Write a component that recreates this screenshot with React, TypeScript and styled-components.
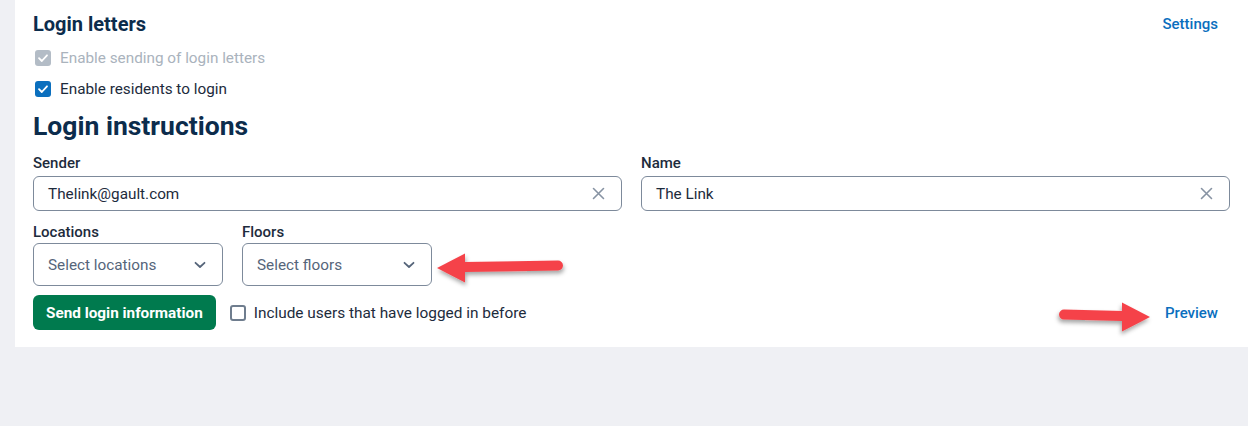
import React from 'react'
import styled, { createGlobalStyle } from 'styled-components'

const GlobalStyle = createGlobalStyle`
  body {
    margin: 0;
    background: #eff0f4;
    font-family: Roboto, 'Liberation Sans', Arial, sans-serif;
  }
`

const Page = styled.div`
  position: relative;
  height: 426px;
  padding-left: 15px;
  background: #eff0f4;
`

const Panel = styled.section`
  background: #fff;
  padding: 12px 18px 17px;
  color: #1d2b3c;
`

const HeaderRow = styled.div`
  display: flex;
  justify-content: space-between;
  align-items: center;
`

const Title = styled.h2`
  margin: 0;
  font-size: 20px;
  line-height: 24px;
  font-weight: 700;
  color: #0c2c4c;
`

const BigTitle = styled.h1`
  margin: 9px 0 0;
  font-size: 26.5px;
  line-height: 32px;
  font-weight: 700;
  color: #0c2c4c;
`

const Link = styled.a`
  color: #0a6fbe;
  font-size: 15px;
  font-weight: 500;
  text-decoration: none;
  margin-right: 12px;
`

const CheckRow = styled.label<{ disabled?: boolean }>`
  display: flex;
  align-items: center;
  gap: 9px;
  height: 24px;
  margin-top: ${p => (p.disabled ? '10px' : '7px')};
  padding-left: 2px;
  font-size: 15.3px;
  color: ${p => (p.disabled ? '#aab3bd' : '#1d2b3c')};
`

const Box = styled.span<{ checked?: boolean; disabled?: boolean }>`
  width: 16px;
  height: 16px;
  box-sizing: border-box;
  border-radius: 3px;
  display: inline-flex;
  align-items: center;
  justify-content: center;
  flex-shrink: 0;
  background: ${p => (p.disabled ? '#b3bcc6' : p.checked ? '#0b6fbe' : '#fff')};
  border: ${p => (p.checked ? 'none' : '2px solid #6f7d8e')};
`

const FieldGrid = styled.div`
  display: grid;
  grid-template-columns: 1fr 1fr;
  column-gap: 19px;
  margin-top: 11px;
`

const SelectRow = styled.div`
  display: flex;
  gap: 19px;
  margin-top: 11px;
`

const Field = styled.div<{ width?: number }>`
  display: flex;
  flex-direction: column;
  width: ${p => (p.width ? `${p.width}px` : 'auto')};
`

const Label = styled.div<{ gap: number }>`
  font-size: 15px;
  line-height: 20px;
  font-weight: 500;
  color: #1d2b3c;
  margin-bottom: ${p => p.gap}px;
`

const InputBox = styled.div<{ tall?: boolean }>`
  box-sizing: border-box;
  height: ${p => (p.tall ? 43 : 35)}px;
  border: 1px solid #7d8a9b;
  border-radius: 6px;
  display: flex;
  align-items: center;
  justify-content: space-between;
  padding: 0 16px 0 14px;
  font-size: 15.3px;
  color: ${p => (p.tall ? '#56657a' : '#1d2b3c')};
`

const BottomRow = styled.div`
  display: flex;
  align-items: center;
  margin-top: 9px;
`

const SendButton = styled.button`
  height: 35px;
  padding: 0 13px;
  border: none;
  border-radius: 6px;
  background: #007a4e;
  color: #fff;
  font-family: inherit;
  font-size: 15.3px;
  font-weight: 700;
`

const IncludeRow = styled.label`
  display: flex;
  align-items: center;
  gap: 8px;
  margin-left: 14px;
  font-size: 15.4px;
  color: #1d2b3c;
`

const Spacer = styled.div`
  flex: 1;
`

const ArrowSvg = styled.svg`
  position: absolute;
  overflow: visible;
`

const Check = () => (
  <svg width="12" height="12" viewBox="0 0 12 12">
    <path d="M2 6.2 L4.8 9 L10 3.3" fill="none" stroke="#fff" strokeWidth="1.8" strokeLinecap="round" strokeLinejoin="round" />
  </svg>
)

const Clear = () => (
  <svg width="13" height="13" viewBox="0 0 13 13">
    <path d="M1.5 1.5 L11.5 11.5 M11.5 1.5 L1.5 11.5" stroke="#8793a3" strokeWidth="1.6" strokeLinecap="round" />
  </svg>
)

const Chevron = () => (
  <svg width="12" height="8" viewBox="0 0 12 8">
    <path d="M1.5 1.8 L6 6 L10.5 1.8" fill="none" stroke="#56657a" strokeWidth="1.8" strokeLinecap="round" strokeLinejoin="round" />
  </svg>
)

interface ArrowProps {
  tipX: number
  tipY: number
  length: number
  flip?: boolean
}

// annotation arrow, drawn pointing left; flipped for the right-pointing one
const Arrow: React.FC<ArrowProps> = ({ tipX, tipY, length, flip }) => {
  const w = length + 4
  const left = flip ? tipX - w + 2 : tipX - 2
  const id = flip ? 'shR' : 'shL'
  return (
    <ArrowSvg width={w} height="40" viewBox={`0 0 ${w} 40`} style={{ left, top: tipY - 20 }}>
      <defs>
        <filter id={id} x="-20%" y="-40%" width="140%" height="200%">
          <feDropShadow dx="1" dy="3" stdDeviation="2" floodColor="#000" floodOpacity="0.35" />
        </filter>
      </defs>
      <g filter={`url(#${id})`} transform={flip ? `translate(${w} 0) scale(-1 1)` : undefined}>
        <path d={`M29 19 L${length - 3} 17.5`} stroke="#f5434a" strokeWidth="10" strokeLinecap="round" />
        <path d="M2 20 L30 5.5 L30 34.5 Z" fill="#f5434a" />
      </g>
    </ArrowSvg>
  )
}

const App: React.FC = () => {
  return (
    <Page>
      <GlobalStyle />
      <Panel>
        <HeaderRow>
          <Title>Login letters</Title>
          <Link href="#">Settings</Link>
        </HeaderRow>
        <CheckRow disabled>
          <Box checked disabled>
            <Check />
          </Box>
          Enable sending of login letters
        </CheckRow>
        <CheckRow>
          <Box checked>
            <Check />
          </Box>
          Enable residents to login
        </CheckRow>
        <BigTitle>Login instructions</BigTitle>
        <FieldGrid>
          <Field>
            <Label gap={3}>Sender</Label>
            <InputBox>
              Thelink@gault.com
              <Clear />
            </InputBox>
          </Field>
          <Field>
            <Label gap={3}>Name</Label>
            <InputBox>
              The Link
              <Clear />
            </InputBox>
          </Field>
        </FieldGrid>
        <SelectRow>
          <Field width={190}>
            <Label gap={1}>Locations</Label>
            <InputBox tall>
              Select locations
              <Chevron />
            </InputBox>
          </Field>
          <Field width={190}>
            <Label gap={1}>Floors</Label>
            <InputBox tall>
              Select floors
              <Chevron />
            </InputBox>
          </Field>
        </SelectRow>
        <BottomRow>
          <SendButton>Send login information</SendButton>
          <IncludeRow>
            <Box />
            Include users that have logged in before
          </IncludeRow>
          <Spacer />
          <Link href="#">Preview</Link>
        </BottomRow>
      </Panel>
      <Arrow tipX={437} tipY={268} length={126} />
      <Arrow tipX={1150} tipY={317} length={91} flip />
    </Page>
  )
}

export default App
